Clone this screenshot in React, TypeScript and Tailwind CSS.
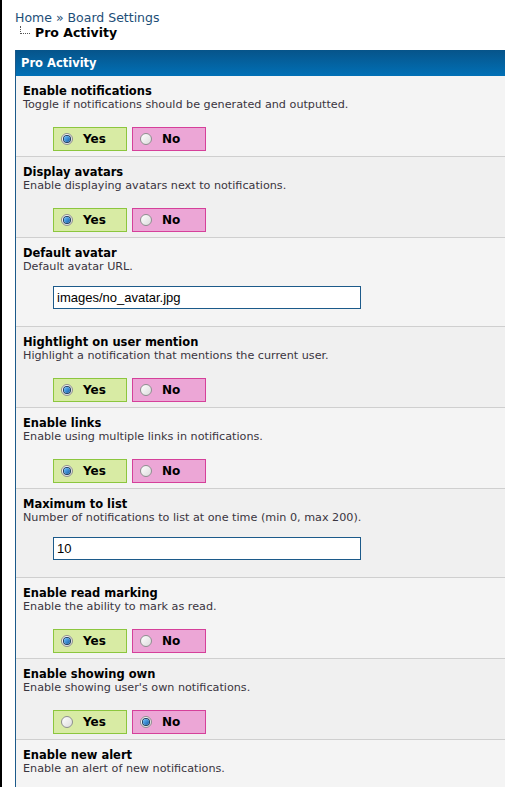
import React from "react";

type Row =
  | { kind: "radio"; title: string; desc: string; value: boolean }
  | { kind: "input"; title: string; desc: string; value: string };

const rows: Row[] = [
  { kind: "radio", title: "Enable notifications", desc: "Toggle if notifications should be generated and outputted.", value: true },
  { kind: "radio", title: "Display avatars", desc: "Enable displaying avatars next to notifications.", value: true },
  { kind: "input", title: "Default avatar", desc: "Default avatar URL.", value: "images/no_avatar.jpg" },
  { kind: "radio", title: "Hightlight on user mention", desc: "Highlight a notification that mentions the current user.", value: true },
  { kind: "radio", title: "Enable links", desc: "Enable using multiple links in notifications.", value: true },
  { kind: "input", title: "Maximum to list", desc: "Number of notifications to list at one time (min 0, max 200).", value: "10" },
  { kind: "radio", title: "Enable read marking", desc: "Enable the ability to mark as read.", value: true },
  { kind: "radio", title: "Enable showing own", desc: "Enable showing user's own notifications.", value: false },
];

function Radio({ checked }: { checked: boolean }) {
  return (
    <span className="relative inline-flex h-[12px] w-[12px] shrink-0 items-center justify-center rounded-full border border-[#8e8f8f] bg-gradient-to-br from-[#ffffff] to-[#dcdcdc]">
      {checked && (
        <span className="h-[6px] w-[6px] rounded-full bg-gradient-to-br from-[#6cc2ff] to-[#0f5ea8] ring-1 ring-[#1c3c5c]" />
      )}
    </span>
  );
}

function YesNo({ value }: { value: boolean }) {
  return (
    <div className="ml-[30px] mt-[16px] flex gap-[5px]">
      <div className="flex h-[24px] w-[74px] items-center border border-[#8cc63e] bg-[#d8eba4] pl-[7px]">
        <Radio checked={value} />
        <span className="ml-[10px] text-[12px] font-bold leading-none text-black">Yes</span>
      </div>
      <div className="flex h-[24px] w-[74px] items-center border border-[#d5409a] bg-[#eca6d6] pl-[7px]">
        <Radio checked={!value} />
        <span className="ml-[10px] text-[12px] font-bold leading-none text-black">No</span>
      </div>
    </div>
  );
}

export default function App() {
  return (
    <div
      className="relative min-h-[787px] w-[505px] overflow-hidden bg-white border-l-2 border-black"
      style={{ fontFamily: '"DejaVu Sans", Verdana, sans-serif' }}
    >
      <div className="pl-[13px] pt-[10px]">
        <div className="text-[12.5px] leading-[15px] text-[#1d4e78]">Home » Board Settings</div>
        <div className="flex items-end leading-[15px]">
          <span className="mb-[6px] ml-[5px] mr-[5px] h-[8px] w-[10px] border-b border-l border-dotted border-[#555]" />
          <span className="text-[12.5px] font-bold text-black">Pro Activity</span>
        </div>
      </div>
      <div className="ml-[13px] mt-[10px] w-[560px] border-l border-[#1c5a8a]">
        <div className="flex h-[26px] items-center bg-gradient-to-b from-[#06548a] to-[#0070b6] pl-[5px] pt-[1px] text-[11.5px] font-bold text-white">
          Pro Activity
        </div>
        {rows.map((r, i) => (
          <div
            key={i}
            className={`border-b border-[#cfcfcf] pl-[7px] pt-[9px] ${i % 2 === 0 ? "bg-[#f4f4f4]" : "bg-[#f0f0f0]"} ${r.kind === "radio" ? "pb-[5px]" : "pb-[17px]"}`}
          >
            <div className="text-[11.5px] font-bold leading-[13px] text-black">{r.title}</div>
            <div className="text-[11.2px] leading-[13px] text-[#3a3540]">{r.desc}</div>
            {r.kind === "radio" ? (
              <YesNo value={r.value} />
            ) : (
              <div className="ml-[30px] mt-[13px] flex h-[23px] w-[308px] items-center border border-[#1c5a8a] bg-white pl-[3px]">
                <span className="text-[13px] text-black" style={{ fontFamily: '"Liberation Sans", Arial, sans-serif' }}>
                  {r.value}
                </span>
              </div>
            )}
          </div>
        ))}
        <div className="bg-[#f4f4f4] pl-[7px] pt-[9px] pb-[30px]">
          <div className="text-[11.5px] font-bold leading-[13px] text-black">Enable new alert</div>
          <div className="text-[11.2px] leading-[13px] text-[#3a3540]">Enable an alert of new notifications.</div>
        </div>
      </div>
    </div>
  );
}
